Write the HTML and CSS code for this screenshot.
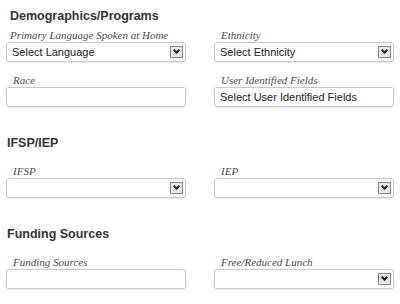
FILE: index.html
```html
<!DOCTYPE html>
<html lang="en">
<head>
    <meta charset="UTF-8">
    <title>Demographics</title>
    <link rel="stylesheet" href="styles.css">
</head>
<body>
    <div class="form">
        <h3 class="first">Demographics/Programs</h3>
        <div class="row">
            <div class="field">
                <label class="first">Primary Language Spoken at Home</label>
                <div class="box select"><span>Select Language</span><i class="arrow"></i></div>
            </div>
            <div class="field">
                <label>Ethnicity</label>
                <div class="box select"><span>Select Ethnicity</span><i class="arrow"></i></div>
            </div>
        </div>
        <div class="row">
            <div class="field">
                <label>Race</label>
                <div class="box"></div>
            </div>
            <div class="field">
                <label>User Identified Fields</label>
                <div class="box"><span>Select User Identified Fields</span></div>
            </div>
        </div>

        <h3 class="section">IFSP/IEP</h3>
        <div class="row">
            <div class="field">
                <label>IFSP</label>
                <div class="box select"><span></span><i class="arrow"></i></div>
            </div>
            <div class="field">
                <label>IEP</label>
                <div class="box select"><span></span><i class="arrow"></i></div>
            </div>
        </div>

        <h3 class="section">Funding Sources</h3>
        <div class="row">
            <div class="field">
                <label>Funding Sources</label>
                <div class="box"></div>
            </div>
            <div class="field">
                <label>Free/Reduced Lunch</label>
                <div class="box select"><span></span><i class="arrow"></i></div>
            </div>
        </div>
    </div>
</body>
</html>
```

FILE: styles.css
```css
body {
    margin: 0;
    background-color: #fff;
    font-family: "Liberation Sans", Arial, sans-serif;
    color: #333;
}

.form {
    padding: 7px 0 0 6px;
}

h3 {
    margin: 0 0 3px 1px;
    font-size: 12.5px;
    line-height: 18px;
    font-weight: bold;
    color: #333;
}

h3.first {
    margin-left: 4px;
}

/* margin collapses with the row above */
h3.section {
    margin-top: 27px;
    margin-bottom: 12px;
}

.row {
    display: flex;
    gap: 28px;
    margin-bottom: 11px;
}

.field {
    width: 180px;
}

.field label {
    display: block;
    padding-left: 7px;
    font-family: "Liberation Serif", Georgia, serif;
    font-style: italic;
    font-size: 11px;
    line-height: 14px;
    color: #4a4a4a;
}

.field label.first {
    padding-left: 4px;
}

.box {
    display: flex;
    align-items: center;
    justify-content: space-between;
    height: 20px;
    box-sizing: border-box;
    border: 1px solid #c8c8c8;
    border-radius: 3px;
    box-shadow: 0 1px 1px rgba(0, 0, 0, 0.08);
    padding: 0 2px 0 5px;
    font-size: 11px;
    color: #222;
}

.arrow {
    width: 13px;
    height: 12px;
    box-sizing: border-box;
    border: 1px solid #8a8a8a;
    background: #e6e6e6;
    position: relative;
}

.arrow::after {
    content: "";
    position: absolute;
    left: 3px;
    top: 1px;
    width: 3px;
    height: 3px;
    border-right: 2px solid #222;
    border-bottom: 2px solid #222;
    transform: rotate(45deg);
}
```
